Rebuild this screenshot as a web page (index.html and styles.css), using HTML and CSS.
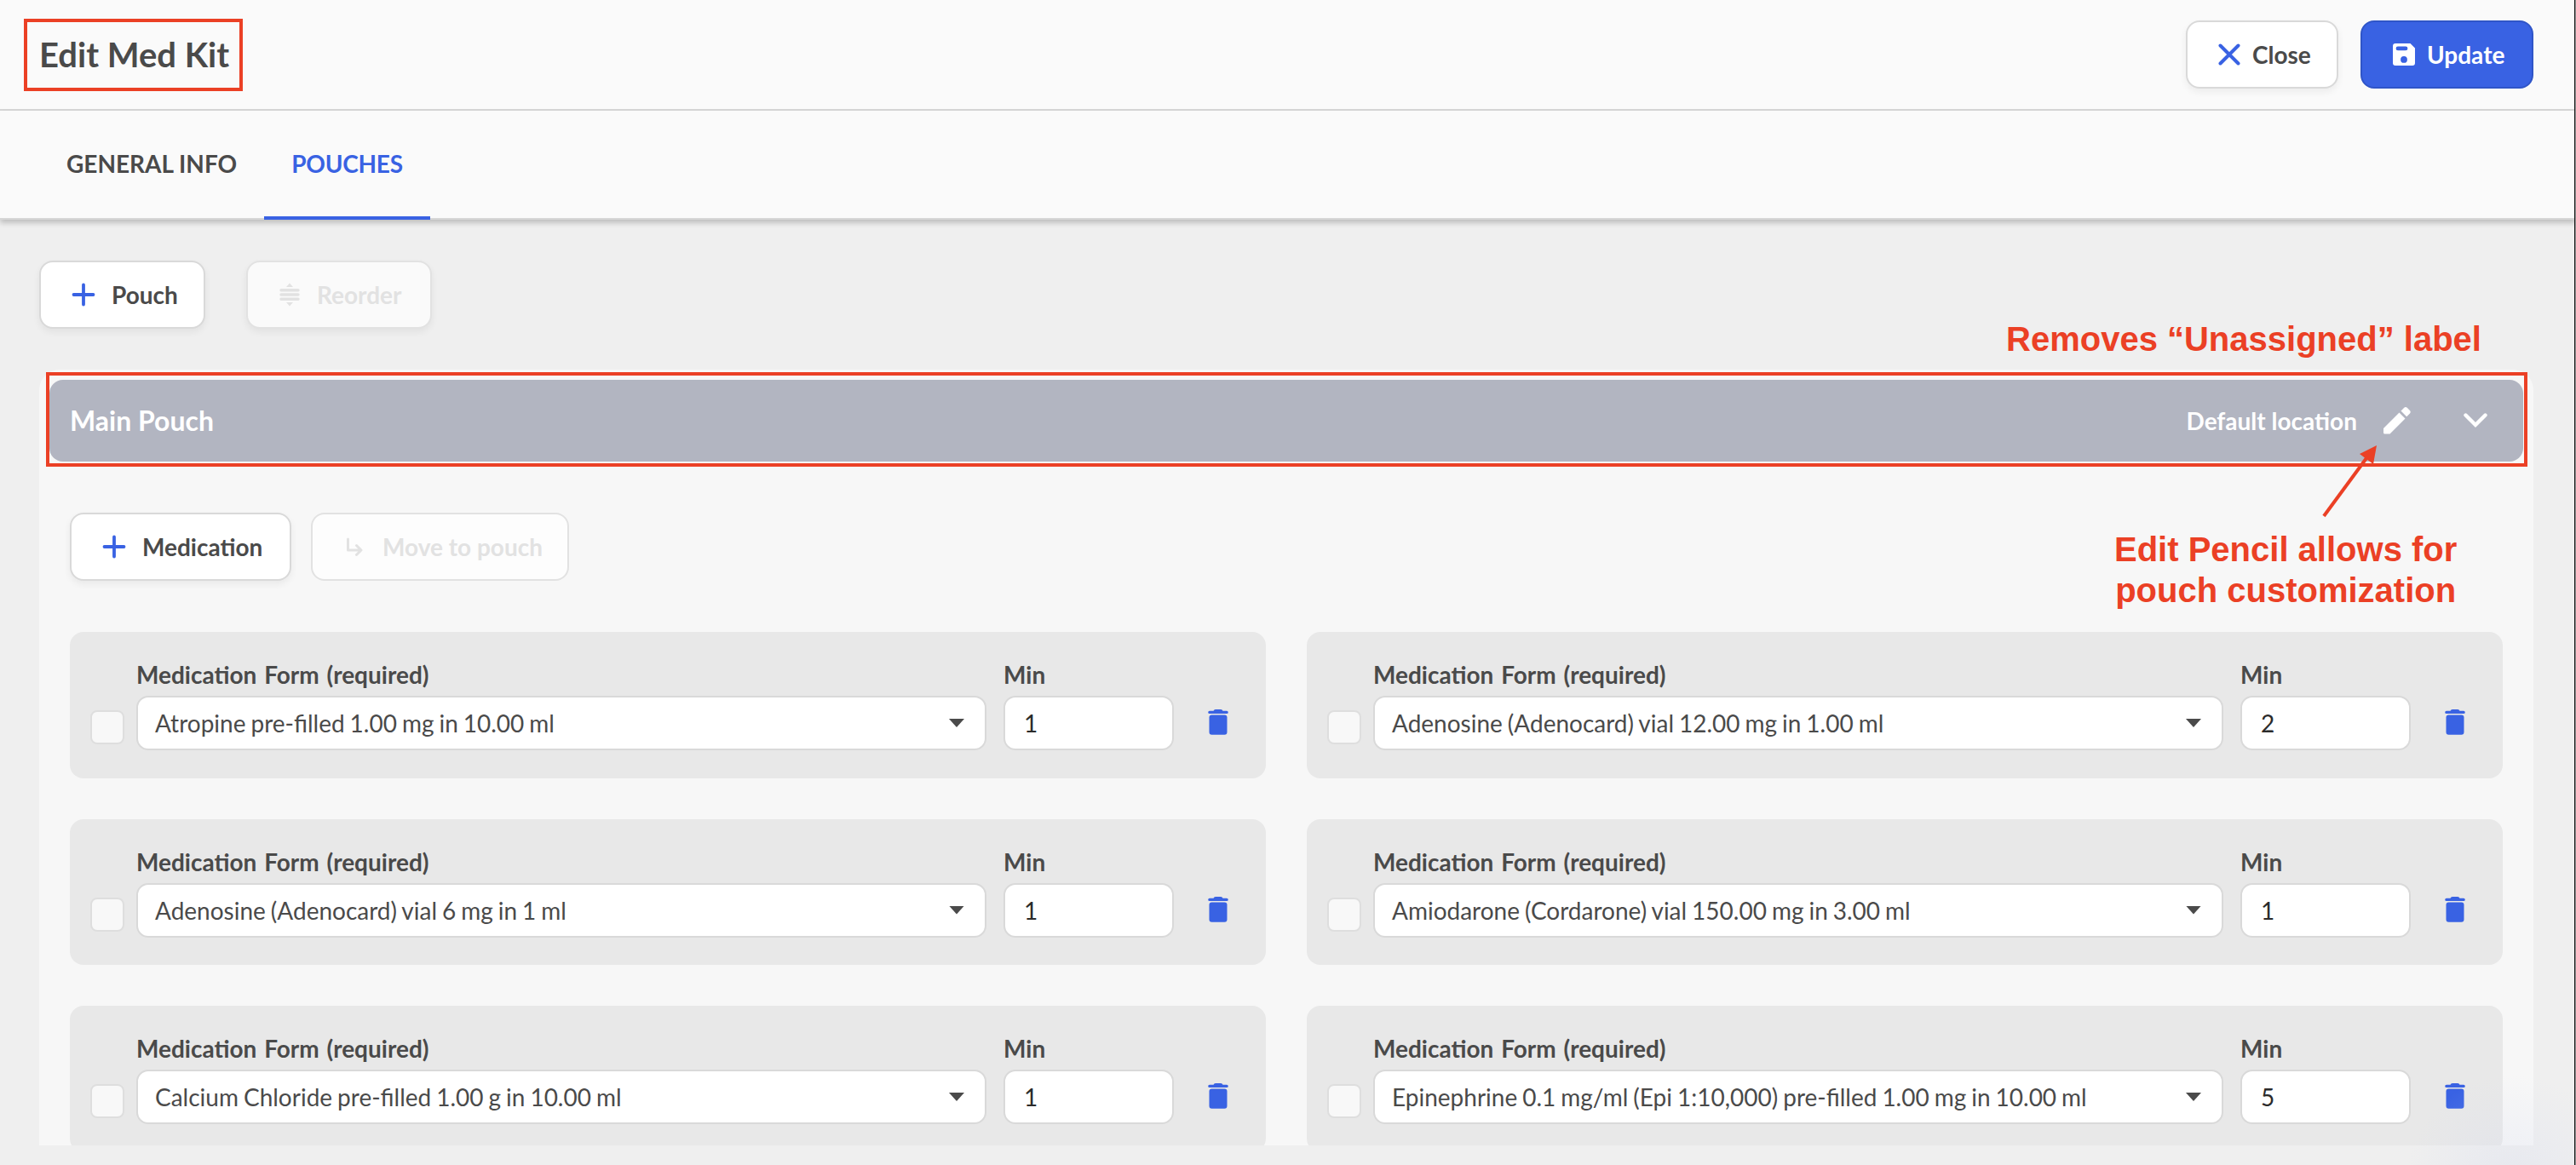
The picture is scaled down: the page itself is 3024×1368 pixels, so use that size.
FILE: index.html
```html
<!DOCTYPE html>
<html lang="en">

<head>
    <meta charset="UTF-8">
    <meta name="viewport" content="width=device-width, initial-scale=1.0">
    <title>Edit Med Kit</title>
    <link rel="stylesheet" href="styles.css">
</head>

<body>
    <svg class="sprite">
        <symbol id="plus" viewBox="0 0 28 28">
            <path d="M14 2.5v23M2.5 14h23" fill="none" stroke="currentColor" stroke-width="3.8" stroke-linecap="round" />
        </symbol>
        <symbol id="trash" viewBox="0 0 24 30">
            <path d="M2 1.8h4.500Q7 0 9 0h6q2 0 2.500 1.800H22q1.800 0 1.800 1.600T22 5H2Q.2 5 .2 3.400T2 1.800z" fill="currentColor" />
            <rect x="1.500" y="6.500" width="21" height="23.300" rx="3" fill="currentColor" />
        </symbol>
    </svg>

    <div class="header">
        <h1 class="title">Edit Med Kit</h1>
        <div class="header-actions">
            <button class="btn btn-close">
                <svg width="26" height="26" viewBox="0 0 26 26"><path d="M2.500 2.500l21 21M23.500 2.500l-21 21" stroke="currentColor" stroke-width="4" stroke-linecap="round" /></svg>
                Close
            </button>
            <button class="btn btn-primary">
                <svg width="26" height="26" viewBox="0 0 26 26"><path fill="currentColor" fill-rule="evenodd" d="M3 0h17.500L26 5.500V23a3 3 0 0 1-3 3H3a3 3 0 0 1-3-3V3a3 3 0 0 1 3-3zM6 3.500a2.400 2.400 0 0 0 0 4.800h9a2.400 2.400 0 0 0 0-4.800zM13 15a3.900 3.900 0 1 0 0 7.800a3.900 3.900 0 0 0 0-7.800z" /></svg>
                Update
            </button>
        </div>
    </div>

    <div class="tabs">
        <div class="tab">GENERAL INFO</div>
        <div class="tab active">POUCHES</div>
    </div>

    <div class="content">
        <div class="toolbar">
            <button class="btn btn-pouch"><svg width="28" height="28"><use href="#plus" /></svg>Pouch</button>
            <button class="btn btn-reorder" disabled>
                <svg width="24" height="28" viewBox="0 0 24 28"><path d="M2 8.700h20M2 14h20M2 19.300h20" stroke="currentColor" stroke-width="3.400" stroke-linecap="round" /><path d="M8 5l4-4.500L16 5zM8 23l4 4.500 4-4.500z" fill="currentColor" /></svg>
                Reorder
            </button>
        </div>

        <div class="pouch">
            <div class="pouch-header">
                <div class="pouch-name">Main Pouch</div>
                <div class="pouch-location">Default location</div>
                <svg class="pencil" width="32" height="32" viewBox="0 0 32 32"><path fill="currentColor" d="M0 25L18.500 6.500l7 7L7.500 31.500H1.500Q0 31.500 0 30zM20.500 4.500l3.500-3.500q2-2 4 0L31 4q1.500 1.800 0 3.500L27.200 11.300z" /></svg>
                <svg class="chevron" width="28" height="18" viewBox="0 0 28 18"><path d="M2.500 2.500L14 14 25.500 2.500" fill="none" stroke="currentColor" stroke-width="4.400" stroke-linecap="round" /></svg>
            </div>

            <div class="toolbar pouch-toolbar">
                <button class="btn btn-medication"><svg width="28" height="28"><use href="#plus" /></svg>Medication</button>
                <button class="btn btn-move" disabled>
                    <svg width="20" height="22" viewBox="0 0 20 22"><path d="M2.500 2v13H17M12.500 9.500L18 15l-5.500 5.500" fill="none" stroke="currentColor" stroke-width="3" stroke-linecap="round" stroke-linejoin="round" /></svg>
                    Move to pouch
                </button>
            </div>

            <div class="med-grid">
                <div class="med-card">
                    <div class="checkbox"></div>
                    <div class="field field-form">
                        <label>Medication Form (required)</label>
                        <div class="input">Atropine pre-filled 1.00 mg in 10.00 ml<span class="caret"></span></div>
                    </div>
                    <div class="field field-min">
                        <label>Min</label>
                        <div class="input">1</div>
                    </div>
                    <svg class="trash"><use href="#trash" /></svg>
                </div>
                <div class="med-card">
                    <div class="checkbox"></div>
                    <div class="field field-form">
                        <label>Medication Form (required)</label>
                        <div class="input">Adenosine (Adenocard) vial 12.00 mg in 1.00 ml<span class="caret"></span></div>
                    </div>
                    <div class="field field-min">
                        <label>Min</label>
                        <div class="input">2</div>
                    </div>
                    <svg class="trash"><use href="#trash" /></svg>
                </div>
                <div class="med-card">
                    <div class="checkbox"></div>
                    <div class="field field-form">
                        <label>Medication Form (required)</label>
                        <div class="input">Adenosine (Adenocard) vial 6 mg in 1 ml<span class="caret"></span></div>
                    </div>
                    <div class="field field-min">
                        <label>Min</label>
                        <div class="input">1</div>
                    </div>
                    <svg class="trash"><use href="#trash" /></svg>
                </div>
                <div class="med-card">
                    <div class="checkbox"></div>
                    <div class="field field-form">
                        <label>Medication Form (required)</label>
                        <div class="input">Amiodarone (Cordarone) vial 150.00 mg in 3.00 ml<span class="caret"></span></div>
                    </div>
                    <div class="field field-min">
                        <label>Min</label>
                        <div class="input">1</div>
                    </div>
                    <svg class="trash"><use href="#trash" /></svg>
                </div>
                <div class="med-card">
                    <div class="checkbox"></div>
                    <div class="field field-form">
                        <label>Medication Form (required)</label>
                        <div class="input">Calcium Chloride pre-filled 1.00 g in 10.00 ml<span class="caret"></span></div>
                    </div>
                    <div class="field field-min">
                        <label>Min</label>
                        <div class="input">1</div>
                    </div>
                    <svg class="trash"><use href="#trash" /></svg>
                </div>
                <div class="med-card">
                    <div class="checkbox"></div>
                    <div class="field field-form">
                        <label>Medication Form (required)</label>
                        <div class="input">Epinephrine 0.1 mg/ml (Epi 1:10,000) pre-filled 1.00 mg in 10.00 ml<span class="caret"></span></div>
                    </div>
                    <div class="field field-min">
                        <label>Min</label>
                        <div class="input">5</div>
                    </div>
                    <svg class="trash"><use href="#trash" /></svg>
                </div>
            </div>
        </div>
    </div>

    <!-- callouts -->
    <div class="mark mark-title"></div>
    <div class="mark mark-pouch"></div>
    <div class="note note-label">Removes “Unassigned” label</div>
    <div class="note note-pencil">Edit Pencil allows for<br>pouch customization</div>
    <svg class="arrow" width="70" height="90" viewBox="0 0 70 90"><path d="M3 85L53 17" stroke="#eb4025" stroke-width="4" /><path d="M65 2L45 12l16 12z" fill="#eb4025" /></svg>
    <div class="glow"></div>
    <div class="window-edge"></div>
</body>

</html>
```
FILE: styles.css
```css
* {
    box-sizing: border-box;
}

body {
    position: relative;
    margin: 0;
    height: 1368px;
    overflow: hidden;
    background-color: #efefef;
    color: #4a4a4a;
    font-family: Lato, sans-serif;
    font-size: 28px;
}

.sprite {
    display: none;
}

.header {
    display: flex;
    justify-content: space-between;
    align-items: center;
    height: 130px;
    padding: 0 50px 0 46px;
    background-color: #fafafa;
    border-bottom: 2px solid #d6d6d6;
}

.title {
    margin: 0;
    font-size: 40px;
    font-weight: bold;
}

.header-actions {
    display: flex;
    gap: 26px;
}

.btn {
    display: flex;
    align-items: center;
    height: 80px;
    padding: 0 0 0 36px;
    border: 2px solid #d9d9d9;
    border-radius: 16px;
    background-color: white;
    box-shadow: 0 4px 8px rgba(0, 0, 0, 0.06);
    color: #4a4a4a;
    font: bold 28px Lato, sans-serif;
    white-space: nowrap;
}

.btn svg {
    flex: none;
    color: #3962e3;
}

.btn:disabled {
    border-color: #e2e2e2;
    background-color: #fafafa;
    color: #e2e2e2;
}

.btn:disabled svg {
    color: #e2e2e2;
}

.btn-close {
    width: 179px;
    gap: 14px;
}

.btn-primary {
    width: 203px;
    gap: 14px;
    border-color: #2f55c8;
    background-color: #3962e3;
    box-shadow: none;
    color: white;
}

.btn-primary svg {
    color: white;
}

.btn-pouch {
    width: 195px;
    gap: 19px;
}

.btn-reorder {
    width: 218px;
    gap: 20px;
    padding-left: 37px;
}

.btn-medication {
    width: 260px;
    gap: 19px;
}

.btn-move {
    width: 303px;
    gap: 23px;
    padding-left: 39px;
}

.pouch-toolbar .btn:disabled {
    background-color: #fdfdfd;
    box-shadow: none;
}

.tabs {
    position: relative;
    display: flex;
    height: 128px;
    padding-left: 46px;
    background-color: #fafafa;
    border-bottom: 2px solid #d6d6d6;
    box-shadow: 0 4px 6px rgba(0, 0, 0, 0.2);
}

.tab {
    height: 128px;
    padding: 0 32px;
    font-weight: bold;
    line-height: 125px;
}

.tab.active {
    border-bottom: 4px solid #3962e3;
    color: #3962e3;
    letter-spacing: -0.25px;
}

.content {
    padding: 48px 50px 0 46px;
}

.toolbar {
    display: flex;
    gap: 48px;
}

.pouch {
    height: 911px;
    margin-top: 48px;
    padding: 12px;
    overflow: hidden;
    border-radius: 24px 24px 0 0;
    background-color: #f7f7f7;
}

.pouch-header {
    display: flex;
    align-items: center;
    height: 96px;
    padding: 0 42px 0 24px;
    border-radius: 16px;
    background-color: #b2b5c1;
    color: white;
    font-weight: bold;
}

.pouch-name {
    flex: 1;
    padding-bottom: 2px;
    font-size: 32px;
}

.pencil {
    margin-left: 31px;
}

.chevron {
    margin-left: 62px;
}

.pouch-toolbar {
    gap: 23px;
    padding: 60px 24px;
}

.med-grid {
    display: grid;
    grid-template-columns: 1fr 1fr;
    gap: 48px;
    padding: 0 24px;
}

.med-card {
    display: flex;
    height: 171.500px;
    padding: 32px 24px;
    border-radius: 16px;
    background-color: #e8e8e8;
}

.checkbox {
    width: 40px;
    height: 40px;
    margin: 60px 14px 0 0;
    border: 2px solid #dedede;
    border-radius: 8px;
    background-color: #f8f8f8;
}

.field label {
    display: block;
    height: 43px;
    font-weight: bold;
    line-height: 36px;
    word-spacing: 2px;
}

.field-form {
    width: 998px;
    margin-right: 20px;
}

.field-min {
    width: 200px;
}

.input {
    display: flex;
    justify-content: space-between;
    align-items: center;
    height: 64px;
    padding: 0 24px 0 20px;
    border: 2px solid #d9d9d9;
    border-radius: 14px;
    background-color: white;
    word-spacing: -1.2px;
}

.field-min .input {
    padding-left: 22px;
    color: #2b2b2b;
}

.caret {
    width: 18px;
    height: 10px;
    background-color: #4a4a4a;
    clip-path: polygon(0 0, 100% 0, 50% 100%);
}

.trash {
    width: 24px;
    height: 30px;
    margin: 59px 0 0 40px;
    color: #3962e3;
}

.mark {
    position: absolute;
    border: 4px solid #eb4025;
}

.mark-title {
    top: 22px;
    left: 28px;
    width: 257px;
    height: 85px;
}

.mark-pouch {
    top: 437px;
    left: 54px;
    width: 2913px;
    height: 111px;
}

.note {
    position: absolute;
    color: #eb4025;
    font: bold 40px/48px "Liberation Sans", sans-serif;
    text-align: center;
    white-space: nowrap;
}

.note-label {
    top: 374px;
    left: 2355px;
}

.note-pencil {
    top: 621px;
    left: 2482px;
}

.arrow {
    position: absolute;
    top: 521px;
    left: 2725px;
}

.glow {
    position: absolute;
    right: 0;
    bottom: 0;
    width: 220px;
    height: 110px;
    background: radial-gradient(circle at 145px 130px, rgba(215, 220, 240, 0.35), rgba(215, 220, 240, 0) 125px);
}

.window-edge {
    position: absolute;
    top: 0;
    right: 0;
    width: 2px;
    height: 100%;
    background-color: #111;
    border-right: 1px solid #999;
}
```
